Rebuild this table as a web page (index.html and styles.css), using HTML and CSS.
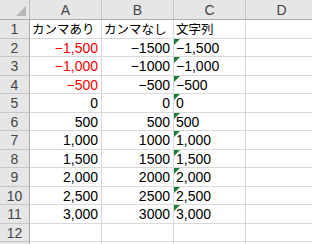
FILE: index.html
```html
<!DOCTYPE html>
<html lang="ja">
<head>
<meta charset="utf-8">
<link rel="stylesheet" href="styles.css">
</head>
<body>
<div class="sheet">
  <div class="corner"><span class="tri"></span></div>
  <div class="colhead">A</div>
  <div class="colhead">B</div>
  <div class="colhead">C</div>
  <div class="colhead">D</div>

  <div class="rowhead">1</div>
  <div class="cell jp">カンマあり</div>
  <div class="cell jp">カンマなし</div>
  <div class="cell jp">文字列</div>
  <div class="cell"></div>

  <div class="rowhead">2</div>
  <div class="cell num red">−1,500</div>
  <div class="cell num">−1500</div>
  <div class="cell txt">−1,500</div>
  <div class="cell"></div>

  <div class="rowhead">3</div>
  <div class="cell num red">−1,000</div>
  <div class="cell num">−1000</div>
  <div class="cell txt">−1,000</div>
  <div class="cell"></div>

  <div class="rowhead">4</div>
  <div class="cell num red">−500</div>
  <div class="cell num">−500</div>
  <div class="cell txt">−500</div>
  <div class="cell"></div>

  <div class="rowhead">5</div>
  <div class="cell num">0</div>
  <div class="cell num">0</div>
  <div class="cell txt">0</div>
  <div class="cell"></div>

  <div class="rowhead">6</div>
  <div class="cell num">500</div>
  <div class="cell num">500</div>
  <div class="cell txt">500</div>
  <div class="cell"></div>

  <div class="rowhead">7</div>
  <div class="cell num">1,000</div>
  <div class="cell num">1000</div>
  <div class="cell txt">1,000</div>
  <div class="cell"></div>

  <div class="rowhead">8</div>
  <div class="cell num">1,500</div>
  <div class="cell num">1500</div>
  <div class="cell txt">1,500</div>
  <div class="cell"></div>

  <div class="rowhead">9</div>
  <div class="cell num">2,000</div>
  <div class="cell num">2000</div>
  <div class="cell txt">2,000</div>
  <div class="cell"></div>

  <div class="rowhead">10</div>
  <div class="cell num">2,500</div>
  <div class="cell num">2500</div>
  <div class="cell txt">2,500</div>
  <div class="cell"></div>

  <div class="rowhead">11</div>
  <div class="cell num">3,000</div>
  <div class="cell num">3000</div>
  <div class="cell txt">3,000</div>
  <div class="cell"></div>

  <div class="rowhead">12</div>
  <div class="cell"></div>
  <div class="cell"></div>
  <div class="cell"></div>
  <div class="cell"></div>

  <div class="rowhead">13</div>
  <div class="cell"></div>
  <div class="cell"></div>
  <div class="cell"></div>
  <div class="cell"></div>
</div>
</body>
</html>
```

FILE: styles.css
```css
html, body {
  margin: 0;
  padding: 0;
  background: #ffffff;
  overflow: hidden;
}

.sheet {
  display: grid;
  grid-template-columns: 30px 72px 72px 72px 72px;
  grid-template-rows: 20px repeat(13, 18.5px);
  width: 318px;
  font-family: "Liberation Sans", "Noto Sans CJK JP", sans-serif;
  font-size: 14px;
  color: #000;
}

.sheet > div {
  box-sizing: border-box;
  border-right: 1px solid #d9d9d9;
  border-bottom: 1px solid #d9d9d9;
  white-space: nowrap;
  display: flex;
  align-items: center;
  line-height: 1;
}

.corner {
  background: #e6e6e6;
  position: relative;
  border-right-color: #bdbdbd !important;
  border-bottom-color: #ababab !important;
}

.tri {
  position: absolute;
  right: 3px;
  bottom: 3px;
  width: 0;
  height: 0;
  border-left: 10px solid transparent;
  border-bottom: 10px solid #b6b6b6;
}

.colhead {
  background: #e6e6e6;
  color: #444;
  justify-content: center;
  border-right-color: #c6c6c6 !important;
  border-bottom-color: #ababab !important;
  padding-top: 1px;
}

.rowhead {
  background: #e6e6e6;
  color: #444;
  justify-content: center;
  border-right-color: #ababab !important;
  border-bottom-color: #c6c6c6 !important;
  padding-top: 1px;
}

.cell {
  position: relative;
  padding: 1px 3px 0 2px;
}

.jp {
  font-family: "Noto Sans CJK JP", sans-serif;
  font-size: 12.5px;
  overflow: visible;
  z-index: 1;
}

.num {
  justify-content: flex-end;
}

.red {
  color: #f00;
}

.txt::before {
  content: "";
  position: absolute;
  top: 0;
  left: 0;
  width: 0;
  height: 0;
  border-top: 6px solid #1f7a3a;
  border-right: 6px solid transparent;
}
```
